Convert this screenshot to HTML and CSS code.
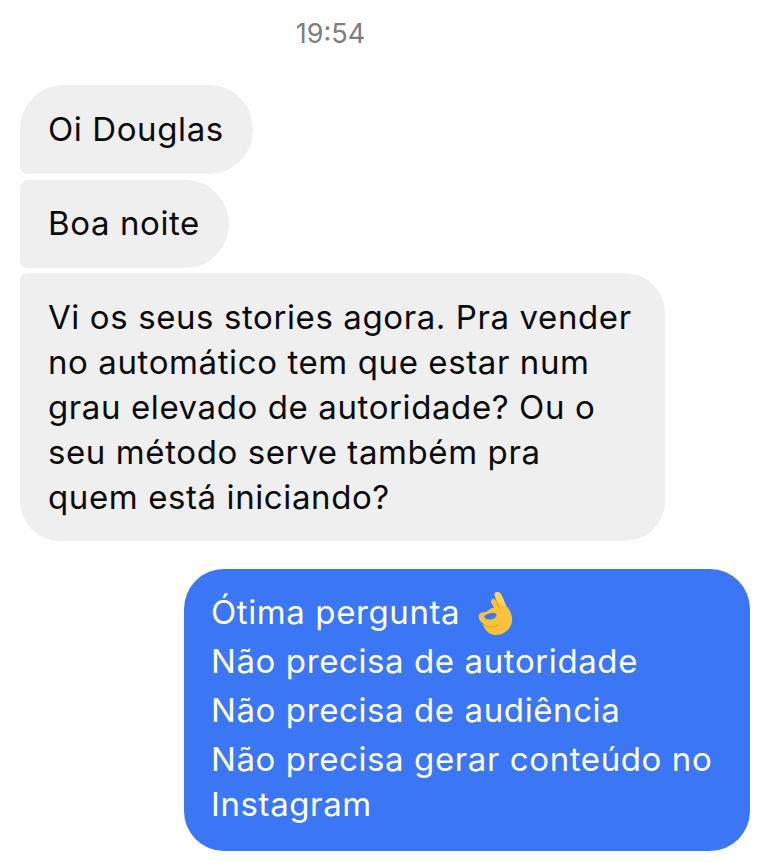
FILE: index.html
```html
<!DOCTYPE html>
<html lang="pt">
<head>
<meta charset="utf-8">
<title>Conversa</title>
<link rel="stylesheet" href="styles.css">
</head>
<body>
<main class="chat">
  <div class="time">19:54</div>
  <div class="group">
    <div class="bubble in first">Oi Douglas</div>
    <div class="bubble in second">Boa noite</div>
    <div class="bubble in third">Vi os seus stories agora. Pra vender<br>no automático tem que estar num<br>grau elevado de autoridade? Ou o<br>seu método serve também pra<br>quem está iniciando?</div>
  </div>
  <div class="bubble out">
    <div class="line">Ótima pergunta <svg class="emoji" viewBox="60 0 105 135" width="35" height="45" aria-hidden="true">
      <path d="M63 72C66 62 76 64 86 62 92 56 100 50 108 50L100 36C96 28 104 20 110 24L116 32 110 12C108 2 120 0 126 6 132 12 140 34 144 44 156 56 164 72 162 90 160 114 136 134 110 132 92 130 78 116 74 96 66 92 60 82 63 72Z" fill="#f8c23a"/>
      <path d="M80 74C90 66 104 64 112 67 118 70 117 76 110 81 102 87 90 87 84 83 80 81 78 77 80 74Z" fill="#3b76f4"/>
      <path d="M110 12C108 2 120 0 126 6 132 12 140 34 144 44L128 46C122 34 112 22 110 12Z" fill="#fbd35e"/>
      <path d="M76 98C88 110 106 112 120 102M124 52L116 34" stroke="#e39a1f" stroke-width="3" fill="none"/>
    </svg></div>
    <div class="line">Não precisa de autoridade</div>
    <div class="line">Não precisa de audiência</div>
    <div class="line">Não precisa gerar conteúdo no</div>
    <div class="line last">Instagram</div>
  </div>
</main>
</body>
</html>
```
FILE: styles.css
```css
html, body {
  margin: 0;
  background: #fff;
}

.chat {
  width: 768px;
  height: 866px;
  overflow: hidden;
  display: flex;
  flex-direction: column;
  font-family: Inter, "Liberation Sans", sans-serif;
  color: #0b0b0b;
}

.time {
  width: 661px;
  padding-top: 19px;
  height: 66px;
  text-align: center;
  font-size: 27px;
  line-height: 30px;
  color: #7e7e7e;
}

.group {
  display: flex;
  flex-direction: column;
  align-items: flex-start;
  gap: 5px;
  padding-left: 20px;
}

.bubble {
  box-sizing: border-box;
  font-size: 33px;
  letter-spacing: 0.6px;
  line-height: 45px;
  white-space: nowrap;
}

.in {
  background: #efefef;
  padding: 22px 28px;
}

.first {
  width: 233px;
  height: 89px;
  margin-bottom: 1px;
  border-radius: 44px 44px 44px 8px;
}

.second {
  width: 209px;
  height: 88px;
  padding-top: 21px;
  border-radius: 8px 44px 44px 8px;
}

.third {
  width: 645px;
  height: 268px;
  border-radius: 8px 40px 40px 40px;
}

.out {
  align-self: flex-end;
  width: 566px;
  height: 282px;
  margin: 28px 18px 0 0;
  padding: 19px 27px;
  background: #3b76f4;
  color: #fff;
  border-radius: 40px;
}

.line {
  height: 49px;
  line-height: 49px;
}

.last {
  margin-top: -4px;
}

.emoji {
  vertical-align: -12px;
  margin-left: 8px;
}
```
